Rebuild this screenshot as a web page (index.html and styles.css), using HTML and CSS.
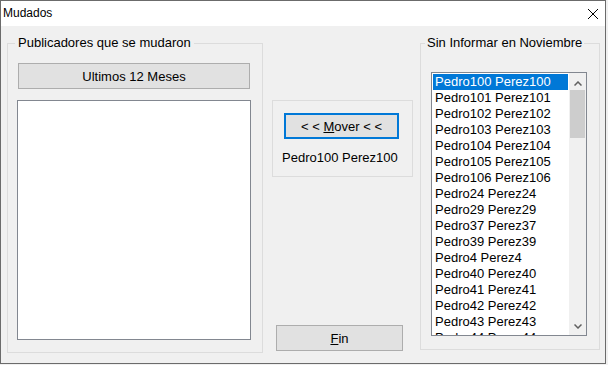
FILE: index.html
```html
<!DOCTYPE html>
<html lang="es">
<head>
<meta charset="utf-8">
<title>Mudados</title>
<link rel="stylesheet" href="styles.css">
</head>
<body>
<div class="window">
  <div class="titlebar">
    <span class="title">Mudados</span>
    <svg class="close" width="10" height="10" viewBox="0 0 10 10" aria-label="Cerrar">
      <path d="M0 0 L10 10 M10 0 L0 10" stroke="#000" stroke-width="1" fill="none"/>
    </svg>
  </div>
  <div class="content">
    <section class="group group-left">
      <div class="legend">Publicadores que se mudaron</div>
      <div class="btn btn-wide"><span>Ultimos 12 Meses</span></div>
      <div class="listbox listbox-empty"></div>
    </section>
    <div class="middle">
      <div class="panel">
        <div class="btn btn-focus"><span>&lt; &lt; <u>M</u>over &lt; &lt;</span></div>
        <div class="selected-name">Pedro100 Perez100</div>
      </div>
      <div class="btn btn-fin"><span><u>F</u>in</span></div>
    </div>
    <section class="group group-right">
      <div class="legend legend-right">Sin Informar en Noviembre</div>
      <div class="listbox list-names">
        <ul class="items">
          <li class="selected">Pedro100 Perez100</li>
          <li>Pedro101 Perez101</li>
          <li>Pedro102 Perez102</li>
          <li>Pedro103 Perez103</li>
          <li>Pedro104 Perez104</li>
          <li>Pedro105 Perez105</li>
          <li>Pedro106 Perez106</li>
          <li>Pedro24 Perez24</li>
          <li>Pedro29 Perez29</li>
          <li>Pedro37 Perez37</li>
          <li>Pedro39 Perez39</li>
          <li>Pedro4 Perez4</li>
          <li>Pedro40 Perez40</li>
          <li>Pedro41 Perez41</li>
          <li>Pedro42 Perez42</li>
          <li>Pedro43 Perez43</li>
          <li>Pedro44 Perez44</li>
        </ul>
        <div class="scrollbar">
          <div class="arrow arrow-up">
            <svg width="8" height="5" viewBox="0 0 8 5"><polyline points="0.5,4.5 4,1 7.5,4.5" fill="none" stroke="#606060" stroke-width="1.5"/></svg>
          </div>
          <div class="thumb"></div>
          <div class="track"></div>
          <div class="arrow arrow-down">
            <svg width="8" height="5" viewBox="0 0 8 5"><polyline points="0.5,0.5 4,4 7.5,0.5" fill="none" stroke="#606060" stroke-width="1.5"/></svg>
          </div>
        </div>
      </div>
    </section>
  </div>
</div>
</body>
</html>
```

FILE: styles.css
```css
* {
  box-sizing: border-box;
}

html {
  background: #f0f0f0;
}

body {
  margin: 0;
  font-family: "Liberation Sans", Arial, sans-serif;
  font-size: 13px;
  color: #000;
}

.window {
  width: 606px;
  height: 364px;
  border: 1px solid #6b6b6b;
  background: #f0f0f0;
  display: flex;
  flex-direction: column;
}

.titlebar {
  height: 25px;
  flex: none;
  background: #fff;
  display: flex;
  align-items: flex-start;
  justify-content: space-between;
  padding: 0 7px 0 2px;
}

.title {
  font-size: 12px;
  line-height: 14px;
  margin-top: 5px;
}

.close {
  margin-top: 8px;
  display: block;
}

.content {
  flex: 1;
  display: flex;
  align-items: flex-start;
  padding: 17px 0 0 6px;
}

.group {
  border: 1px solid #dcdcdc;
  display: flex;
  flex-direction: column;
  align-items: flex-start;
}

.legend {
  margin: -9px 0 0 7px;
  padding: 0 3px;
  background: #f0f0f0;
  line-height: 15px;
  white-space: nowrap;
}

.legend-right {
  margin-left: 4px;
  padding: 0 2px;
}

.btn {
  border: 1px solid #adadad;
  background: #e1e1e1;
  display: flex;
  align-items: center;
  justify-content: center;
  line-height: 15px;
  white-space: pre;
}

.btn u {
  text-underline-offset: 1px;
}

.listbox {
  border: 1px solid #828790;
  background: #fff;
}

/* left group */
.group-left {
  width: 256px;
  height: 310px;
}

.btn-wide {
  width: 232px;
  height: 26px;
  margin: 13px 0 0 10px;
}

.listbox-empty {
  width: 234px;
  height: 240px;
  margin: 11px 0 0 9px;
}

/* middle column */
.middle {
  width: 141px;
  margin-left: 9px;
  padding-top: 57px;
  display: flex;
  flex-direction: column;
  align-items: flex-start;
}

.panel {
  width: 141px;
  height: 77px;
  border: 1px solid #dcdcdc;
  display: flex;
  flex-direction: column;
  align-items: flex-start;
}

.btn-focus {
  width: 115px;
  height: 26px;
  margin: 12px 0 0 11px;
  border: 2px solid #0078d7;
}

.selected-name {
  margin: 11px 0 0 9px;
  line-height: 15px;
  white-space: nowrap;
}

.btn-fin {
  width: 127px;
  height: 26px;
  margin: 148px 0 0 4px;
}

/* right group */
.group-right {
  width: 180px;
  height: 307px;
  margin-left: 7px;
}

.list-names {
  width: 156px;
  height: 264px;
  margin: 22px 0 0 10px;
  display: flex;
  overflow: hidden;
}

.items {
  flex: 1;
  list-style: none;
  margin: 0;
  padding: 1px 1px 0 1px;
  overflow: hidden;
}

.items li {
  height: 16px;
  line-height: 16px;
  padding-left: 2px;
  white-space: nowrap;
}

.items li.selected {
  background: #0078d7;
  color: #fff;
}

.scrollbar {
  width: 17px;
  flex: none;
  background: #f0f0f0;
  display: flex;
  flex-direction: column;
}

.arrow {
  height: 17px;
  flex: none;
  display: flex;
  justify-content: center;
  align-items: flex-start;
}

.arrow svg {
  display: block;
}

.arrow-up {
  padding-top: 8px;
}

.arrow-down {
  padding-top: 6px;
}

.thumb {
  height: 48px;
  flex: none;
  margin: 0 1px;
  background: #cdcdcd;
}

.track {
  flex: 1;
}
```
